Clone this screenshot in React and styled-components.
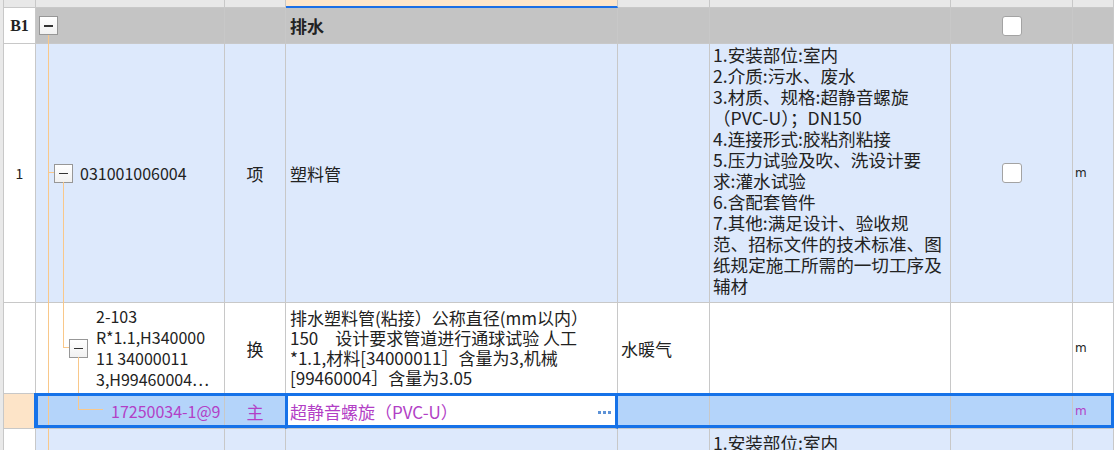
import styled, { createGlobalStyle, css } from "styled-components";

const GlobalStyle = createGlobalStyle`
    body {
        margin: 0;
        background: #ffffff;
        font-family: "Noto Sans CJK SC", "Noto Sans", sans-serif;
        color: #222;
    }
`

const Frame = styled.div`
    width: 1114px;
    height: 450px;
    overflow: hidden;
    padding-left: 3px;
    box-sizing: border-box;
    background: #e9e9e9;
`

const Table = styled.div`
    border-left: 1px solid #c8c8c8;
    background: #ffffff;
    height: 100%;
`

const Row = styled.div`
    position: relative;
    display: grid;
    grid-template-columns: 32px 189px 61px 332px 92px 241px 122px 1fr;
    height: ${(p) => p.$h}px;
    ${(p) =>
        p.$selected &&
        css`
            &::after {
                content: "";
                position: absolute;
                left: 30px;
                right: 0;
                top: -1px;
                bottom: 1px;
                border: 3px solid #1672e8;
                border-left-width: 4px;
                pointer-events: none;
            }
        `}
`

const Cell = styled.div`
    position: relative;
    box-sizing: border-box;
    min-width: 0;
    border-right: 1px solid #c8c8c8;
    border-bottom: 1px solid #c8c8c8;
    background: ${(p) => p.$bg || "transparent"};
    display: flex;
    align-items: ${(p) => p.$align || "center"};
    justify-content: ${(p) => p.$justify || "flex-start"};
    padding: ${(p) => p.$pad || "0 4px"};
    font-size: 17px;
    line-height: 21px;
    color: ${(p) => p.$color || "#222"};
    white-space: nowrap;
`

const HeadCell = styled.div`
    box-sizing: border-box;
    border-right: 1px solid #c8c8c8;
    border-bottom: ${(p) => (p.$active ? "2px solid #1b6fe6" : "1px solid #c8c8c8")};
    background: ${(p) => (p.$active ? "#fde6cb" : "#e8e8e8")};
`

const GroupLabel = styled.span`
    font-family: "Liberation Serif", serif;
    font-weight: bold;
    font-size: 16px;
`

const GroupTitle = styled.span`
    font-weight: bold;
    font-size: 17px;
`

const RowNo = styled.span`
    font-size: 14px;
`

const Code = styled.span`
    font-size: 16px;
    line-height: 21px;
    margin-left: ${(p) => p.$ml || 0}px;
    color: ${(p) => p.$color || "#222"};
`

const Lines = styled.div`
    display: flex;
    flex-direction: column;
    margin-left: ${(p) => p.$ml || 0}px;
    font-size: ${(p) => p.$size || 17}px;
    line-height: ${(p) => p.$lh || 21}px;
`

const Toggle = styled.span`
    position: relative;
    flex: none;
    width: 19px;
    height: 19px;
    box-sizing: border-box;
    border: 1px solid #979797;
    background: linear-gradient(#ffffff, #f1f1f1);
    &::before {
        content: "";
        position: absolute;
        left: 4px;
        right: 4px;
        top: 8px;
        height: 1.5px;
        background: #333;
    }
`

const VLine = styled.span`
    position: absolute;
    left: ${(p) => p.$x}px;
    top: ${(p) => p.$top ?? -1}px;
    ${(p) => (p.$height != null ? `height: ${p.$height}px;` : "bottom: -1px;")}
    width: 1px;
    background: #f9c88a;
`

const HLine = styled.span`
    position: absolute;
    left: ${(p) => p.$x}px;
    top: ${(p) => p.$y}px;
    width: ${(p) => p.$w}px;
    height: 1px;
    background: #f9c88a;
`

const Check = styled.span`
    width: 20px;
    height: 20px;
    box-sizing: border-box;
    border: 1.5px solid #a3a3a3;
    border-radius: 3px;
    background: #ffffff;
`

const Unit = styled.span`
    font-family: "DejaVu Sans", sans-serif;
    font-size: 12px;
    color: ${(p) => p.$color || "#222"};
`

const EditCell = styled(Cell)`
    background: #ffffff;
    border-left: 3px solid #1672e8;
    border-right: 3px solid #1672e8;
    margin-left: -1px;
    justify-content: space-between;
    padding: 0 4px 0 2px;
`

const More = styled.span`
    display: flex;
    gap: 2px;
    margin-top: 2px;
    & > i {
        width: 3px;
        height: 3px;
        background: #5d92d6;
    }
`

const BLUE = "#dde9fc";
const SEL = "#b4d4fa";
const PURPLE = "#b23fc6";

const descLines = [
    "1.安装部位:室内",
    "2.介质:污水、废水",
    "3.材质、规格:超静音螺旋",
    "（PVC-U）；DN150",
    "4.连接形式:胶粘剂粘接",
    "5.压力试验及吹、洗设计要",
    "求:灌水试验",
    "6.含配套管件",
    "7.其他:满足设计、验收规",
    "范、招标文件的技术标准、图",
    "纸规定施工所需的一切工序及",
    "辅材",
];

const quotaName = [
    "排水塑料管(粘接）公称直径(mm以内）",
    "150　设计要求管道进行通球试验 人工",
    "*1.1,材料[34000011］含量为3,机械",
    "[99460004］含量为3.05",
];

const quotaCode = ["2-103", "R*1.1,H340000", "11 34000011", "3,H99460004…"];

const App = () => {
    return (
        <>
            <GlobalStyle />
            <Frame>
                <Table>
                    <Row $h={8}>
                        <HeadCell />
                        <HeadCell />
                        <HeadCell />
                        <HeadCell $active />
                        <HeadCell />
                        <HeadCell />
                        <HeadCell />
                        <HeadCell />
                    </Row>

                    <Row $h={36}>
                        <Cell $bg="#ffffff" $justify="center" $pad="0">
                            <GroupLabel>B1</GroupLabel>
                        </Cell>
                        <Cell $bg="#c4c4c4" $pad="0 0 0 3px">
                            <Toggle />
                            <VLine $x={12} $top={27} />
                        </Cell>
                        <Cell $bg="#c4c4c4" />
                        <Cell $bg="#c4c4c4">
                            <GroupTitle>排水</GroupTitle>
                        </Cell>
                        <Cell $bg="#c4c4c4" />
                        <Cell $bg="#c4c4c4" />
                        <Cell $bg="#c4c4c4" $justify="center">
                            <Check />
                        </Cell>
                        <Cell $bg="#c4c4c4" />
                    </Row>

                    <Row $h={259}>
                        <Cell $bg="#ffffff" $justify="center" $pad="0">
                            <RowNo>1</RowNo>
                        </Cell>
                        <Cell $bg={BLUE} $pad="0 0 0 18px">
                            <VLine $x={12} />
                            <HLine $x={12} $y={128} $w={6} />
                            <Toggle />
                            <VLine $x={27} $top={138} />
                            <Code $ml={7}>031001006004</Code>
                        </Cell>
                        <Cell $bg={BLUE} $justify="center">项</Cell>
                        <Cell $bg={BLUE}>塑料管</Cell>
                        <Cell $bg={BLUE} />
                        <Cell $bg={BLUE} $align="flex-start" $pad="0 3px">
                            <Lines $size={17.6}>
                                {descLines.map((l) => (
                                    <span key={l}>{l}</span>
                                ))}
                            </Lines>
                        </Cell>
                        <Cell $bg={BLUE} $justify="center">
                            <Check />
                        </Cell>
                        <Cell $bg={BLUE} $pad="0 2px">
                            <Unit>m</Unit>
                        </Cell>
                    </Row>

                    <Row $h={91}>
                        <Cell $bg="#ffffff" />
                        <Cell $bg="#ffffff" $pad="0 0 0 33px">
                            <VLine $x={12} />
                            <VLine $x={27} $height={45} />
                            <HLine $x={27} $y={44} $w={6} />
                            <Toggle />
                            <VLine $x={42} $top={54} />
                            <Lines $size={16} $lh={21} $ml={8}>
                                {quotaCode.map((l) => (
                                    <span key={l}>{l}</span>
                                ))}
                            </Lines>
                        </Cell>
                        <Cell $bg="#ffffff" $justify="center">换</Cell>
                        <Cell $bg="#ffffff">
                            <Lines $lh={20}>
                                {quotaName.map((l) => (
                                    <span key={l}>{l}</span>
                                ))}
                            </Lines>
                        </Cell>
                        <Cell $bg="#ffffff" $pad="0 3px">水暖气</Cell>
                        <Cell $bg="#ffffff" />
                        <Cell $bg="#ffffff" />
                        <Cell $bg="#ffffff" $pad="0 2px">
                            <Unit>m</Unit>
                        </Cell>
                    </Row>

                    <Row $h={35} $selected>
                        <Cell $bg="#fde4c8" />
                        <Cell $bg={SEL} $pad="0 0 0 75px">
                            <VLine $x={12} />
                            <VLine $x={42} $height={16} />
                            <HLine $x={42} $y={15} $w={25} />
                            <Code $color={PURPLE}>17250034-1@9</Code>
                        </Cell>
                        <Cell $bg={SEL} $justify="center" $color={PURPLE}>主</Cell>
                        <EditCell $color={PURPLE}>
                            <span>超静音螺旋（PVC-U）</span>
                            <More>
                                <i />
                                <i />
                                <i />
                            </More>
                        </EditCell>
                        <Cell $bg={SEL} />
                        <Cell $bg={SEL} />
                        <Cell $bg={SEL} />
                        <Cell $bg={SEL} $pad="0 2px">
                            <Unit $color={PURPLE}>m</Unit>
                        </Cell>
                    </Row>

                    <Row $h={60}>
                        <Cell $bg="#ffffff" />
                        <Cell $bg={BLUE}>
                            <VLine $x={12} />
                        </Cell>
                        <Cell $bg={BLUE} />
                        <Cell $bg={BLUE} />
                        <Cell $bg={BLUE} />
                        <Cell $bg={BLUE} $align="flex-start" $pad="3px 3px 0">
                            <Lines $size={17.6}>
                                <span>1.安装部位:室内</span>
                            </Lines>
                        </Cell>
                        <Cell $bg={BLUE} />
                        <Cell $bg={BLUE} />
                    </Row>
                </Table>
            </Frame>
        </>
    )
}

export default App
